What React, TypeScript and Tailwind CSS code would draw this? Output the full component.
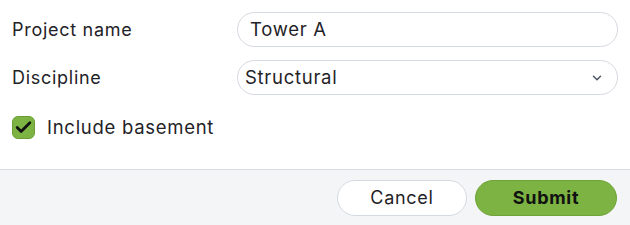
import { Check, ChevronDown } from 'lucide-react';

export default function App() {
  return (
    <div className="w-[630px] h-[225px] bg-white flex flex-col text-[#1f2328] tracking-[0.045em]" style={{ fontFamily: 'Inter, "Liberation Sans", sans-serif' }}>
      <div className="flex flex-col px-3 pt-3 h-[169px]">
        <div className="flex items-center h-[35px]">
          <label className="w-[225px] text-[18px]">Project name</label>
          <div className="flex-1 h-[35px] rounded-full border border-[#d5d9e0] flex items-center px-3 text-[18.5px]">
            Tower A
          </div>
        </div>
        <div className="flex items-center h-[35px] mt-[13px]">
          <label className="w-[225px] text-[18px]">Discipline</label>
          <div className="flex-1 h-[35px] rounded-full border border-[#d5d9e0] flex items-center justify-between pl-[7px] pr-[13px] text-[18.5px]">
            <span>Structural</span>
            <ChevronDown className="w-[14px] h-[14px] text-[#4b5563]" strokeWidth={2.5} />
          </div>
        </div>
        <div className="flex items-center mt-[19px] gap-3">
          <span className="w-[23px] h-[23px] rounded-[6px] bg-[#7cb342] border border-[#6a9e34] flex items-center justify-center">
            <Check className="w-[19px] h-[19px] text-[#111]" strokeWidth={3.5} />
          </span>
          <span className="text-[18.5px]">Include basement</span>
        </div>
      </div>
      <div className="flex-1 bg-[#f4f5f7] border-t border-[#d8dce2] flex items-center justify-end gap-2 pr-[13px]">
        <button className="w-[130px] h-[36px] rounded-full bg-white border border-[#d5d9e0] text-[18px]">Cancel</button>
        <button className="w-[142px] h-[36px] rounded-full bg-[#7cb342] border border-[#6fa33a] text-[18px] font-bold text-[#111]">Submit</button>
      </div>
    </div>
  );
}
